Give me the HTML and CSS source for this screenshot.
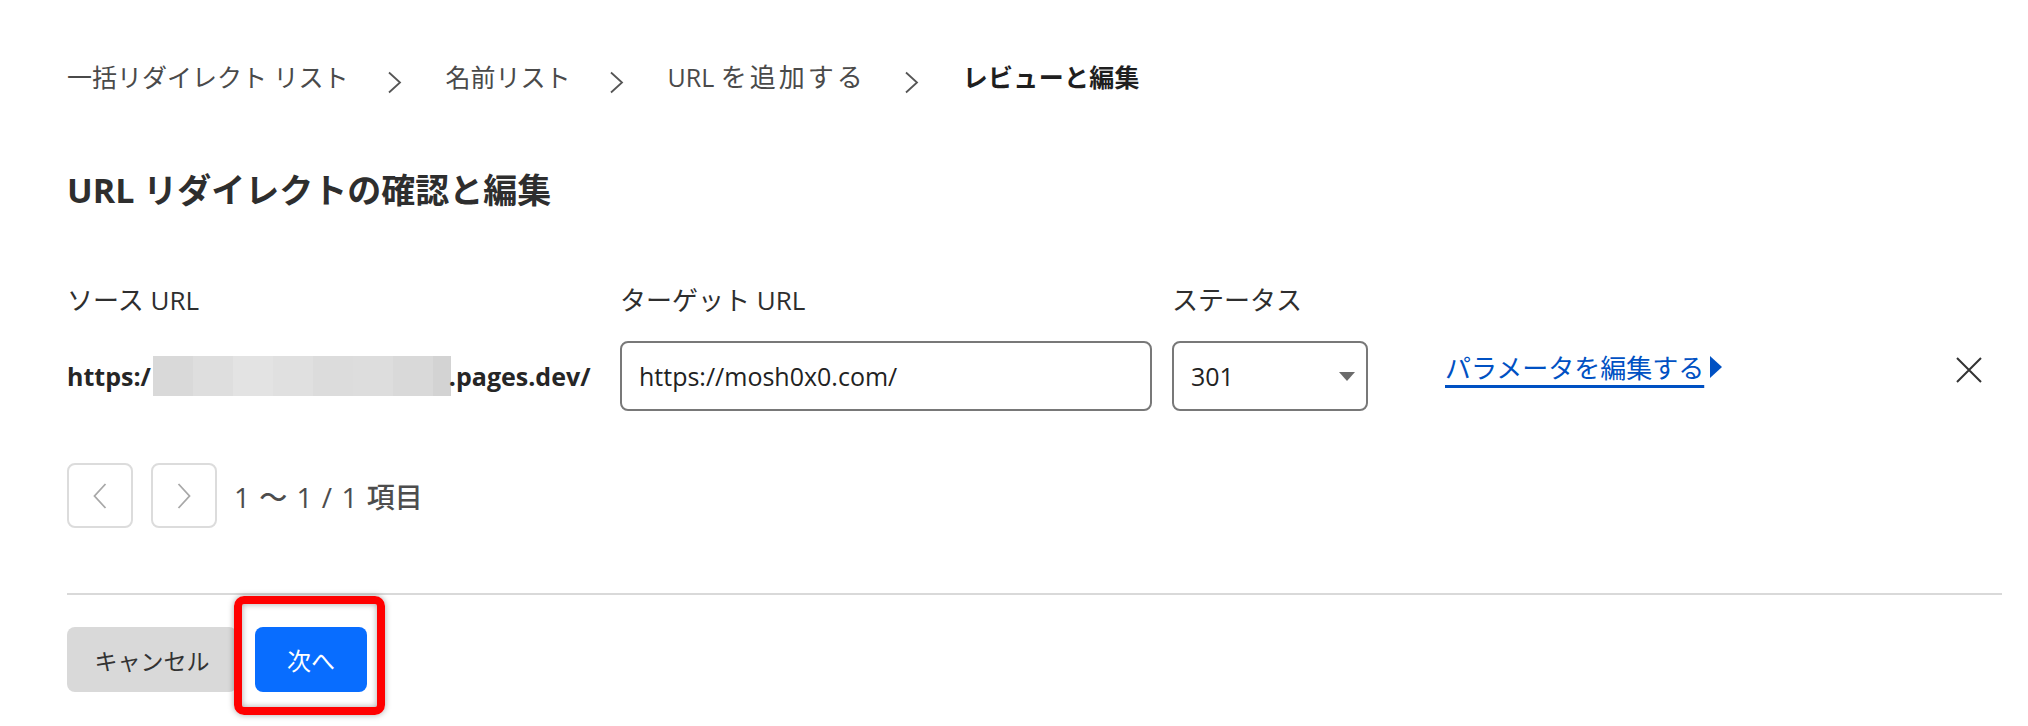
FILE: index.html
```html
<!DOCTYPE html>
<html lang="ja">
<head>
<meta charset="utf-8">
<title>URL リダイレクトの確認と編集</title>
<link rel="stylesheet" href="styles.css">
</head>
<body>
<main class="page">
  <nav class="crumbs">
    <span class="crumb">一括リダイレクト リスト</span>
    <svg class="sep" viewBox="0 0 15 23" width="15" height="23"><path d="M2 1.5 L13 11.5 L2 21.5" fill="none" stroke="#555" stroke-width="1.8"/></svg>
    <span class="crumb">名前リスト</span>
    <svg class="sep" viewBox="0 0 15 23" width="15" height="23"><path d="M2 1.5 L13 11.5 L2 21.5" fill="none" stroke="#555" stroke-width="1.8"/></svg>
    <span class="crumb">URL <span class="kana">を追加する</span></span>
    <svg class="sep" viewBox="0 0 15 23" width="15" height="23"><path d="M2 1.5 L13 11.5 L2 21.5" fill="none" stroke="#555" stroke-width="1.8"/></svg>
    <span class="crumb current">レビューと編集</span>
  </nav>

  <h1 class="title">URL リダイレクトの確認と編集</h1>

  <div class="grid">
    <div class="label">ソース URL</div>
    <div class="label">ターゲット URL</div>
    <div class="label">ステータス</div>
    <div></div>
    <div></div>

    <div class="source">https:/<span class="blur"></span>.pages.dev/</div>
    <div class="field">https://mosh0x0.com/</div>
    <div class="field select">
      <span>301</span>
      <svg viewBox="0 0 16 9" width="16" height="9"><path d="M0 0 H16 L8 9 Z" fill="#6b6b6b"/></svg>
    </div>
    <div class="linkcell">
      <a class="link" href="#">パラメータを編集する</a>
      <svg class="tri" viewBox="0 0 12 22" width="12" height="22"><path d="M0 0 L12 11 L0 22 Z" fill="#0051c3"/></svg>
    </div>
    <svg class="close" viewBox="0 0 26 26" width="26" height="26"><path d="M1 1 L25 25 M25 1 L1 25" stroke="#333" stroke-width="2" fill="none"/></svg>
  </div>

  <div class="pager">
    <button class="pgbtn" type="button"><svg viewBox="0 0 14 26" width="14" height="26"><path d="M12.5 1 L1.5 13 L12.5 25" fill="none" stroke="#a8a8a8" stroke-width="1.8"/></svg></button>
    <button class="pgbtn" type="button"><svg viewBox="0 0 14 26" width="14" height="26"><path d="M1.5 1 L12.5 13 L1.5 25" fill="none" stroke="#a8a8a8" stroke-width="1.8"/></svg></button>
    <span class="count">1 ～ 1 / 1 項目</span>
  </div>

  <hr class="divider">

  <div class="actions">
    <button class="btn cancel" type="button">キャンセル</button>
    <button class="btn next" type="button">次へ</button>
    <div class="highlight"></div>
  </div>
</main>
</body>
</html>
```

FILE: styles.css
```css
* { box-sizing: border-box; }
html, body { margin: 0; background: #fff; }
body {
  font-family: "Open Sans", "Noto Sans CJK JP", sans-serif;
  color: #313131;
  font-size: 25px;
  min-height: 726px;
}
.page {
  padding: 59px 26px 40px 67px;
}
.crumbs {
  display: flex;
  align-items: center;
  height: 36px;
  line-height: 36px;
}
.crumb { color: #4a4a4a; white-space: nowrap; }
.kana { font-size: 26px; letter-spacing: 3px; }
.crumb.current { color: #1f1f1f; font-weight: 700; letter-spacing: 0.3px; }
.sep { margin: 10px 44px 0 38px; flex: none; }

.title {
  margin: 73px 0 0 0;
  font-size: 34px;
  line-height: 44px;
  font-weight: 700;
  color: #2e2e2e;
}

.grid {
  margin-top: 70px;
  display: grid;
  grid-template-columns: 533px 532px 196px 1fr auto;
  column-gap: 20px;
  row-gap: 23px;
  align-items: center;
}
.label {
  line-height: 36px;
  color: #2e2e2e;
  font-size: 26px;
}
.source {
  font-weight: 700;
  color: #262626;
  display: flex;
  align-items: center;
  white-space: nowrap;
}
.blur {
  display: inline-block;
  flex: none;
  width: 298px;
  height: 40px;
  margin-left: 2px;
  margin-right: -2px;
  background: linear-gradient(90deg,
    #d9d9d9 0 40px, #dedede 40px 80px, #e3e3e3 80px 120px,
    #e0e0e0 120px 160px, #dcdcdc 160px 200px, #dddddd 200px 240px,
    #d9d9d9 240px 280px, #d3d3d3 280px 298px);
}
.field {
  height: 70px;
  border: 2px solid #787878;
  border-radius: 8px;
  padding: 0 17px;
  display: flex;
  align-items: center;
  color: #222;
  font-size: 25px;
}
.select {
  justify-content: space-between;
  padding-right: 11px;
}
.linkcell {
  padding-left: 57px;
  display: flex;
  align-items: center;
  margin-top: -18px;
}
.link {
  color: #0051c3;
  font-size: 26px;
  text-decoration: underline;
  text-decoration-thickness: 3px;
  text-underline-offset: 7px;
}
.tri { margin-left: 6px; }
.close { margin-right: 20px; margin-top: -12px; }

.pager {
  margin-top: 52px;
  display: flex;
  align-items: center;
  gap: 18px;
}
.pgbtn {
  width: 66px;
  height: 65px;
  border: 2px solid #dcdcdc;
  border-radius: 8px;
  background: #fff;
  display: flex;
  align-items: center;
  justify-content: center;
  padding: 0;
}
.count {
  margin-left: -1px;
  color: #4d4d4d;
  font-size: 28px;
  font-weight: 500;
  word-spacing: 2px;
}

.divider {
  margin: 65px 0 0 0;
  border: 0;
  height: 2px;
  background: #d9d9d9;
}

.actions {
  position: relative;
  margin-top: 32px;
  display: flex;
  gap: 18px;
}
.btn {
  height: 65px;
  border: 0;
  border-radius: 8px;
  font-family: inherit;
  font-size: 24px;
  padding: 0;
}
.cancel {
  width: 170px;
  background: #d9d9d9;
  color: #333;
  font-size: 23px;
}
.next {
  width: 112px;
  background: #086dff;
  color: #fff;
}
.highlight {
  position: absolute;
  left: 167px;
  top: -31px;
  width: 151px;
  height: 119px;
  border: 8px solid #ff0000;
  border-radius: 10px;
  box-shadow: 0 0 6px rgba(0,0,0,0.35), inset 0 0 6px rgba(0,0,0,0.35);
}
```
